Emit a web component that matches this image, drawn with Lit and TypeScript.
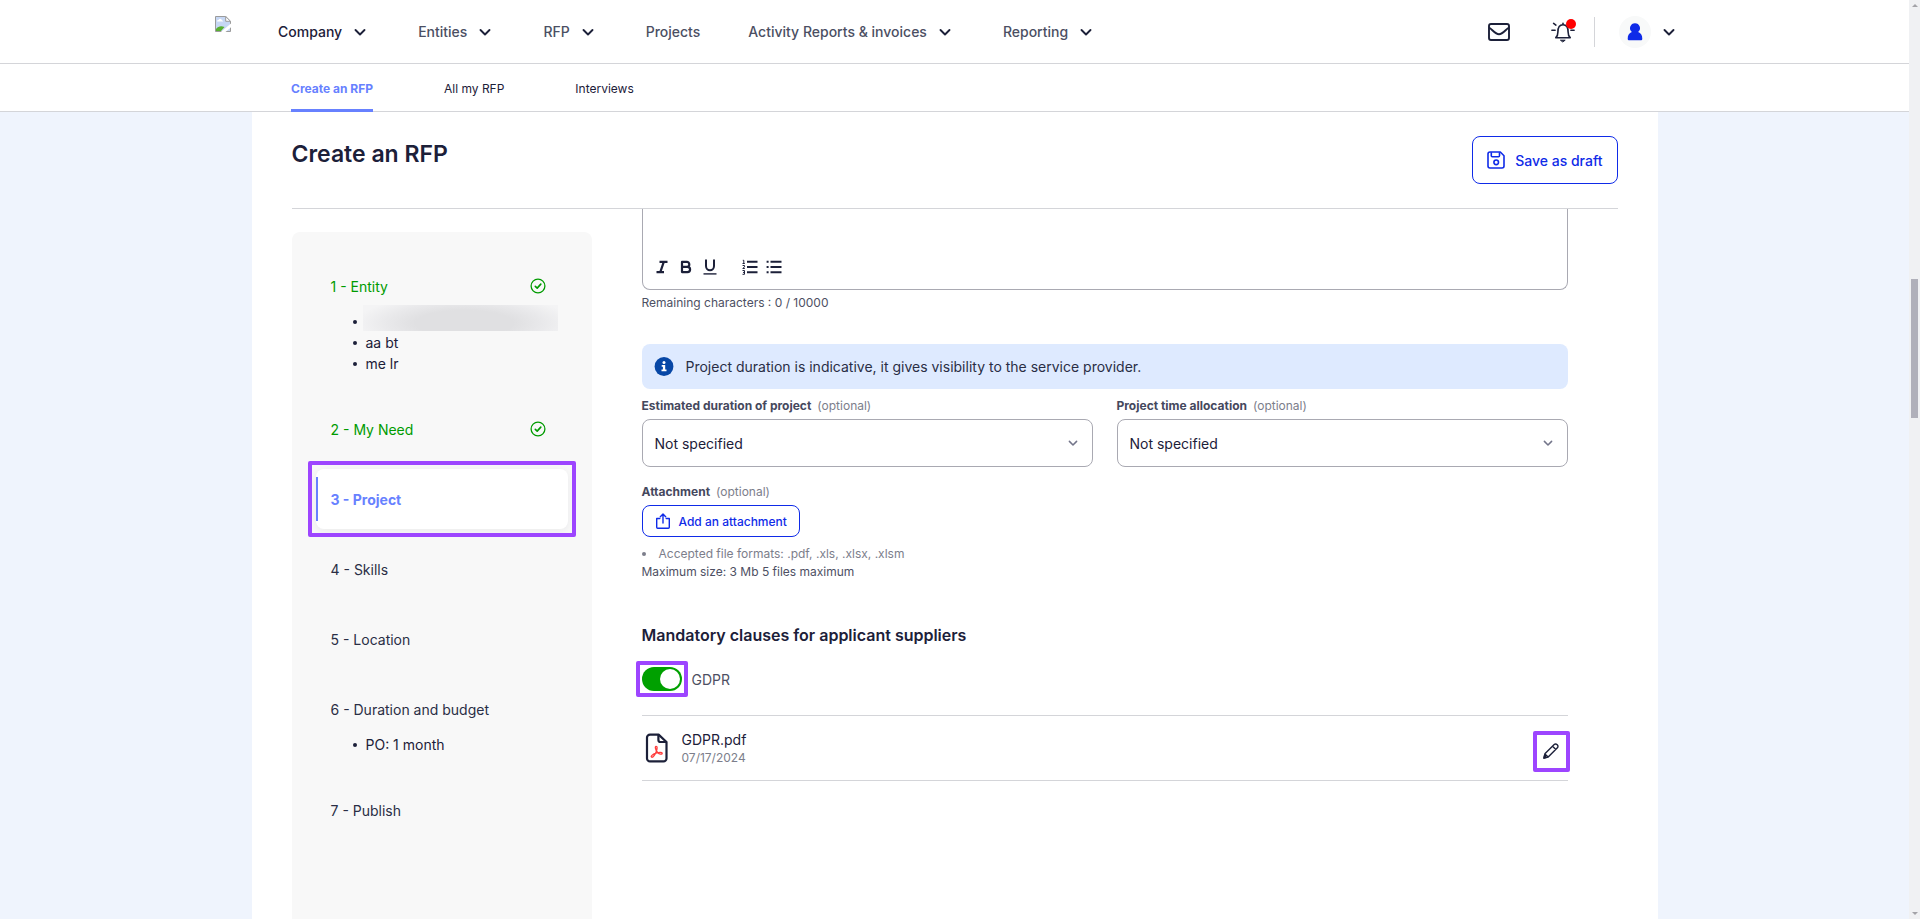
import { LitElement, html, svg, css, nothing } from "lit";
import { customElement, state } from "lit/decorators.js";
import { classMap } from "lit/directives/class-map.js";

interface Step {
  id: number;
  label: string;
  done?: boolean;
  details?: (string | null)[];
}

const MENU = [
  { label: "Company", more: true },
  { label: "Entities", more: true },
  { label: "RFP", more: true },
  { label: "Projects", more: false },
  { label: "Activity Reports & invoices", more: true },
  { label: "Reporting", more: true },
];

const TABS = ["Create an RFP", "All my RFP", "Interviews"];

// A null detail is a name that has been masked.
const STEPS: Step[] = [
  { id: 1, label: "Entity", done: true, details: [null, "aa bt", "me lr"] },
  { id: 2, label: "My Need", done: true },
  { id: 3, label: "Project" },
  { id: 4, label: "Skills" },
  { id: 5, label: "Location" },
  { id: 6, label: "Duration and budget", details: ["PO: 1 month"] },
  { id: 7, label: "Publish" },
];

const chevron = (size: number) => html`<svg width=${size} height=${size} viewBox="0 0 20 20" fill="none" stroke="currentColor" stroke-width="1.9" stroke-linecap="round" stroke-linejoin="round" aria-hidden="true">${svg`<path d="M5.5 8l4.5 4.5L14.500 8"/>`}</svg>`;

const checkIcon = html`<svg class="check" width="16" height="16" viewBox="0 0 16 16" fill="none" stroke="currentColor" stroke-width="1.3" stroke-linecap="round" stroke-linejoin="round" aria-hidden="true"><circle cx="8" cy="8" r="6.900"/><path stroke-width="1.600" d="M5.300 8.300l1.900 1.800 3.600-4"/></svg>`;

@customElement("app-header")
export class AppHeader extends LitElement {
  static styles = css`
    :host { display: block; background: #fff; color: #1c2039; }
    a, button { font: inherit; color: inherit; text-decoration: none; background: none; border: 0; padding: 0; cursor: pointer; }
    .bar { border-bottom: 1px solid #d4d5d9; }
    .inner { max-width: 1479px; margin: 0 auto; display: flex; box-sizing: border-box; }
    .top { height: 63px; align-items: center; padding-right: 15px; }
    .logo { width: 16px; height: 16px; flex: none; align-self: flex-start; margin: 16px 47px 0 0; }
    .menu { display: flex; gap: 48px; font-size: 14px; line-height: 20px; font-weight: 500; color: #4b4f63; }
    .menu button { display: flex; align-items: center; gap: 8px; white-space: nowrap; }
    .menu > :first-child { color: #1c2039; }
    svg { display: block; color: #1c2039; }
    .tools { display: flex; align-items: center; margin-left: auto; }
    .alert { position: relative; margin: 0 19px 0 40px; }
    .dot { position: absolute; top: -1px; right: -1px; width: 10px; height: 10px; border-radius: 50%; background: #f00; }
    .rule { width: 1px; height: 30px; background: #d4d5d9; }
    .account { display: flex; align-items: center; gap: 8px; margin-left: 24px; }
    .avatar { width: 32px; height: 32px; border-radius: 50%; background: #f8f9f9; display: grid; place-items: center; }
    .tabs { height: 48px; gap: 71px; padding-left: 76px; font-size: 12px; }
    .sub { box-shadow: inset 0 -1px #d4d5d9; }
    .tab { display: flex; align-items: center; box-sizing: border-box; padding-top: 4px; border-bottom: 3px solid transparent; }
    .current { color: #6781ff; font-weight: 700; border-color: #6781ff; }
  `;

  render() {
    return html`
      <header class="bar">
        <div class="inner top">
          <svg class="logo" viewBox="0 0 16 16" role="img" aria-label="Logo">
            <path d="M.5.5h10.200l4.800 4.800v10.200H.5z" fill="#c6d7f4" stroke="#9b9b9b"/>
            <path d="M2 5.500c0-1 .8-1.700 1.700-1.700C4.200 2.800 5 2.500 5.700 2.900c.8.200 1.200.9 1.300 1.500.8 0 1.200.6 1.200 1.100z" fill="#fff"/>
            <path d="M1 15v-2c2-2.700 5-3.500 8.500-2L6 15z" fill="#58b030"/>
            <path d="M10.700.5v4.800h4.800z" fill="#fff" stroke="#9b9b9b"/>
            <path d="M5.800 16L16 7.600v3.600L10.500 16z" fill="#fff"/>
          </svg>
          <nav class="menu" aria-label="Main">
            ${MENU.map((m) => m.more
              ? html`<button type="button" aria-haspopup="true">${m.label}${chevron(20)}</button>`
              : html`<a href="#">${m.label}</a>`)}
          </nav>
          <div class="tools">
            <button type="button" aria-label="Messages">
              <svg width="24" height="24" viewBox="0 0 24 24" fill="none" stroke="currentColor" stroke-width="1.900" stroke-linejoin="round" aria-hidden="true"><rect x="2" y="4" width="20" height="16" rx="2"/><path d="M2 7.500c3.500 2 6 6.700 10 6.700S18.500 9.500 22 7.500"/></svg>
            </button>
            <button type="button" class="alert" aria-label="Notifications">
              <svg width="24" height="24" viewBox="0 0 24 24" fill="none" stroke="currentColor" stroke-width="1.600" stroke-linecap="round" stroke-linejoin="round" aria-hidden="true"><path d="M4.800 17.700h14.400c-1.600-1.400-2.100-3-2.100-5.700 0-4.700-1.500-7.200-5.100-7.200S6.900 7.300 6.900 12c0 2.700-.5 4.300-2.100 5.700zM12 4.700V3.200M.9 10.200h3.200M19.900 10.200h3.200M2.600 3.400l2.300 1.700M21.400 3.400l-2.300 1.700"/><path d="M9.800 20.200h4.400L12 21.700z" fill="currentColor" stroke-width="1"/></svg>
              <span class="dot"></span>
            </button>
            <span class="rule"></span>
            <button type="button" class="account" aria-label="My account">
              <span class="avatar"><svg width="16" height="18" viewBox="0 0 16 18" fill="#0f2be8" aria-hidden="true"><path d="M8 .2a5 5 0 0 1 3.100 8.900c2.900 1 4.200 3.300 4.200 6.600 0 1-.6 1.600-1.600 1.600H2.300c-1 0-1.600-.6-1.600-1.600 0-3.300 1.300-5.600 4.200-6.600A5 5 0 0 1 8 .2z"/></svg></span>
              ${chevron(20)}
            </button>
          </div>
        </div>
      </header>
      <nav class="sub" aria-label="RFP">
        <div class="inner tabs">
          ${TABS.map((t, i) => html`<a href="#" class=${classMap({ tab: true, current: i === 0 })}>${t}</a>`)}
        </div>
      </nav>`;
  }
}

@customElement("step-list")
export class StepList extends LitElement {
  static styles = css`
    :host { display: block; box-sizing: border-box; padding: 24px; background: #f8f8f8; border-radius: 8px 8px 0 0; font-size: 14px; }
    ol, ul { list-style: none; margin: 0; padding: 0; }
    .steps { display: flex; flex-direction: column; gap: 10px; }
    .step { position: relative; border-radius: 8px; }
    .head { display: flex; align-items: center; justify-content: space-between; height: 60px; padding: 0 22px 0 15px; color: #2a2e45; text-decoration: none; }
    .done .head { color: #009b00; }
    .active { background: #fff; box-shadow: 0 2px 8px rgba(28, 32, 57, .06); }
    .active .head { color: #6781ff; font-weight: 700; }
    .active::before { content: ""; position: absolute; left: 0; top: 8px; bottom: 8px; width: 2px; background: #6781ff; }
    .active::after { content: ""; position: absolute; inset: -8px; border: 4px solid #9d45ff; border-radius: 2px; pointer-events: none; }
    .details { margin-top: -5px; padding: 0 15px 15px 37px; line-height: 21px; color: #1c2039; }
    .details li { position: relative; display: flex; align-items: center; gap: 9px; height: 21px; }
    .details li::before { content: ""; width: 4px; height: 4px; border-radius: 50%; background: #1c2039; }
    .masked { position: absolute; left: 10px; top: -6px; width: 195px; height: 26px; background: radial-gradient(ellipse 56% 110% at 52% 70%, #e0e0e2 45%, #e9e9eb 72%, #f4f4f5 100%); }
    .check { display: block; }
  `;

  render() {
    return html`<ol class="steps">
      ${STEPS.map((s) => html`
        <li class=${classMap({ step: true, done: !!s.done, active: s.id === 3 })}>
          <a class="head" href="#">${s.id} - ${s.label}${s.done ? checkIcon : nothing}</a>
          ${s.details ? html`<ul class="details">
            ${s.details.map((d) => html`<li>${d ?? html`<span class="masked"></span>`}</li>`)}
          </ul>` : nothing}
        </li>`)}
    </ol>`;
  }
}

@customElement("project-form")
export class ProjectForm extends LitElement {
  @state() private gdpr = true;

  static styles = css`
    :host { display: block; color: #1c2039; font-size: 14px; }
    * { box-sizing: border-box; }
    p, h2, ul { margin: 0; padding: 0; }
    button { font: inherit; color: inherit; background: none; border: 0; padding: 0; cursor: pointer; }
    svg { display: block; }
    .editor { border: 1px solid #a9a9b2; border-top: 0; border-radius: 0 0 8px 8px; }
    textarea { display: block; width: 100%; height: 46px; border: 0; outline: 0; resize: none; background: none; font: inherit; padding: 8px 12px; }
    .toolbar { display: flex; padding: 0 7px 10px; }
    .toolbar button { width: 24px; height: 24px; display: grid; place-items: center; }
    .lists { display: flex; margin-left: 16px; }
    .small { font-size: 12px; line-height: 18px; color: #4d5063; }
    .remaining { margin-top: 4px; }
    .info { display: flex; align-items: center; gap: 12px; margin-top: 32px; padding: 12px; line-height: 21px; border-radius: 8px; background: #deeaff; color: #2a2e45; }
    .fields { display: grid; grid-template-columns: 1fr 1fr; gap: 24px; margin-top: 8px; }
    .label { display: flex; gap: 6px; margin-bottom: 4px; font-size: 12px; line-height: 18px; font-weight: 700; color: #45485d; }
    .opt { font-weight: 400; color: #7c7e8b; }
    .picker { position: relative; display: block; }
    select { appearance: none; display: block; width: 100%; height: 48px; padding: 0 12px; border: 1px solid #a9a9b2; border-radius: 8px; background: #fff; font: inherit; color: #1c2039; }
    .picker svg { position: absolute; right: 12px; top: 16px; color: #73758a; pointer-events: none; }
    .attachment { margin-top: 16px; }
    .add { display: flex; align-items: center; gap: 8px; height: 32px; padding: 0 12px; border: 1px solid #0f2be8; border-radius: 8px; color: #0f2be8; font-size: 12px; font-weight: 500; }
    .formats { display: flex; align-items: center; gap: 13px; margin-top: 8px; color: #7c7e8b; list-style: none; }
    .formats::before { content: ""; width: 4px; height: 4px; border-radius: 50%; background: #7c7e8b; }
    h2 { margin-top: 44px; font-size: 16px; line-height: 20px; font-weight: 600; }
    .switch { display: flex; align-items: center; gap: 10px; margin-top: 22px; color: #4d5063; width: max-content; }
    .marked { position: relative; display: block; }
    .marked::after { content: ""; position: absolute; inset: -6px; border: 4px solid #9d45ff; border-radius: 2px; pointer-events: none; }
    .toggle { appearance: none; display: block; margin: 0; width: 40px; height: 24px; border-radius: 12px; background: #b4b5be; cursor: pointer; }
    .toggle::before { content: ""; display: block; width: 20px; height: 20px; margin: 2px; border-radius: 50%; background: #fff; }
    .toggle:checked { background: #00a000; }
    .toggle:checked::before { margin-left: 18px; }
    .file { display: flex; align-items: center; gap: 10px; height: 66px; margin-top: 24px; border: solid #d4d5d9; border-width: 1px 0; }
    .file > svg { width: 30px; height: 30px; flex: none; }
    .name { line-height: 19px; }
    .date { line-height: 17px; color: #7c7e8b; }
    .edit { width: 33px; height: 37px; display: grid; place-items: center; margin: 6px 0 0 auto; }
    .edit::after { inset: -2px; }
  `;

  private picker(id: string, label: string) {
    return html`<div>
      <label class="label" for=${id}>${label}<span class="opt">(optional)</span></label>
      <span class="picker">
        <select id=${id}><option>Not specified</option></select>
        ${chevron(16)}
      </span>
    </div>`;
  }

  render() {
    return html`
      <div class="editor">
        <textarea aria-label="Project description"></textarea>
        <div class="toolbar">
          <button type="button" aria-label="Italic"><svg width="12" height="14" viewBox="0 0 12 14" fill="none" stroke="currentColor" stroke-width="2.200"><path d="M3.500 1.800h8M.5 12.200h7.500M7.800 1.800L4.300 12.200"/></svg></button>
          <button type="button" aria-label="Bold"><svg width="12" height="14" viewBox="0 0 12 14" fill="none" stroke="currentColor" stroke-width="2.200" stroke-linejoin="round"><path d="M2 1.900h4.800a2.500 2.500 0 0 1 0 5H2zM2 6.900h5.500a2.600 2.600 0 0 1 0 5.200H2z"/></svg></button>
          <button type="button" aria-label="Underline"><svg width="14" height="16" viewBox="0 0 14 16" fill="none" stroke="currentColor"><path stroke-width="2" d="M3 .6v6.400a4 4.200 0 0 0 8 0V.6"/><path stroke-width="1.400" d="M.5 14.900h13"/></svg></button>
          <span class="lists">
            <button type="button" aria-label="Numbered list"><svg width="16" height="16" viewBox="0 0 16 16" fill="none" stroke="currentColor"><path stroke-width="2" d="M5 2.700h10.500M5 8h10.500M5 13.300h10.500"/><path stroke-width="1" d="M.8 1.300h1v3.200M.5 4.500h2.300M.6 6.500h1.900v1.300L.8 9.500h2M.5 11.500h2v3.800H.5M1 13.400h1.500"/></svg></button>
            <button type="button" aria-label="Bulleted list"><svg width="16" height="16" viewBox="0 0 16 16" fill="none" stroke="currentColor" stroke-width="2"><path d="M4.500 2.700h11M4.500 8h11M4.500 13.300h11M.6 2.700h2M.6 8h2M.6 13.300h2"/></svg></button>
          </span>
        </div>
      </div>
      <p class="small remaining">Remaining characters : 0 / 10000</p>

      <div class="info" role="note">
        <svg width="20" height="20" viewBox="0 0 20 20" aria-hidden="true"><circle cx="10" cy="9.500" r="9.400" fill="#0747a6"/><g fill="#fff"><circle cx="10" cy="5.500" r="1.500"/><path d="M7.700 8h3.500v4.600h1.300v1.700H7.500v-1.700h1.400V9.700H7.700z"/></g></svg>
        <span>Project duration is indicative, it gives visibility to the service provider.</span>
      </div>

      <div class="fields">
        ${this.picker("duration", "Estimated duration of project")}
        ${this.picker("allocation", "Project time allocation")}
      </div>

      <div class="attachment">
        <label class="label" for="attach">Attachment<span class="opt">(optional)</span></label>
        <button type="button" class="add" id="attach">
          <svg width="16" height="16" viewBox="0 0 16 16" fill="none" stroke="currentColor" stroke-width="1.400" stroke-linecap="round" stroke-linejoin="round" aria-hidden="true"><path d="M4.800 5.500H1.700v8.700a1 1 0 0 0 1 1h10.600a1 1 0 0 0 1-1V5.500h-3.100M8 10V1.200M5.300 3.800L8 1.100l2.700 2.700"/></svg>
          Add an attachment
        </button>
        <ul><li class="small formats">Accepted file formats: .pdf, .xls, .xlsx, .xlsm</li></ul>
        <p class="small">Maximum size: 3 Mb 5 files maximum</p>
      </div>

      <h2>Mandatory clauses for applicant suppliers</h2>
      <label class="switch">
        <span class="marked"><input class="toggle" type="checkbox" role="switch" .checked=${this.gdpr}
          @change=${(e: Event) => (this.gdpr = (e.target as HTMLInputElement).checked)} /></span>
        GDPR
      </label>

      <div class="file">
        <svg viewBox="0 0 30 30" fill="none" stroke="#1c2039" stroke-width="2.200" stroke-linejoin="round" aria-hidden="true"><path d="M8 1.600h8.600L24.500 9v16.400a3 3 0 0 1-3 3H8a3 3 0 0 1-3-3V4.600a3 3 0 0 1 3-3z"/><path d="M16.400 1.800V7a2 2 0 0 0 2 2h6"/><path stroke="#ff3e3e" stroke-width="1.300" d="M13.900 13.300c1.700-.2 1.300 2.400.5 4.900-1.200 3.400-3.300 6.500-4.700 6-1.600-.7.800-2.900 4.200-4 3-.9 6.300-1.300 6.300.2 0 1.600-3.400.7-5-1.400-1.500-1.900-2.500-5.500-1.300-5.700z"/></svg>
        <div>
          <div class="name">GDPR.pdf</div>
          <div class="small date">07/17/2024</div>
        </div>
        <button type="button" class="edit marked" aria-label="Edit GDPR.pdf">
          <svg width="16" height="16" viewBox="0 0 16 16" fill="none" stroke="#1c2039" stroke-width="1.400" stroke-linejoin="round" aria-hidden="true"><path d="M.9 15.100l1-4.300L11.200 1.600a1.900 1.900 0 0 1 2.700 0l.5.500a1.900 1.900 0 0 1 0 2.700L5.200 14.100zM9.600 3.200l3.200 3.200M1.900 10.900l3.200 3.200"/><path d="M1 15l.6-2.500 1.900 1.900z" fill="#1c2039"/></svg>
        </button>
      </div>`;
  }
}

@customElement("app-root")
export class AppRoot extends LitElement {
  static styles = css`
    :host { display: grid; grid-template-columns: minmax(0, 1fr) 11px; min-height: 100vh; background: #eff4fd; color: #1c2039; font-family: Inter, "Noto Sans", sans-serif; font-size: 14px; }
    .page { display: flex; flex-direction: column; }
    .sheet { flex: 1; display: flex; flex-direction: column; box-sizing: border-box; width: 100%; max-width: 1406px; margin: 0 auto; padding: 0 40px; background: #fff; }
    .title { display: flex; align-items: flex-start; justify-content: space-between; padding: 24px 0; border-bottom: 1px solid #d4d5d9; }
    h1 { margin: 0; font-size: 23px; line-height: 36px; font-weight: 600; }
    .save { display: flex; align-items: center; gap: 10px; height: 48px; padding: 0 14px; border: 1px solid #0f2be8; border-radius: 8px; background: #fff; color: #0f2be8; font: inherit; font-weight: 500; cursor: pointer; }
    .save svg { display: block; }
    .body { flex: 1; display: flex; gap: 50px; padding-right: 50px; }
    step-list { flex: none; width: 300px; margin-top: 23px; }
    project-form { flex: 1; min-width: 0; }
    .scroll { display: grid; grid-template-rows: 11px 268fr 139fr 490fr 11px; justify-items: center; align-items: center; background: #f0f1f3; }
    .arrow { border: 3px solid transparent; width: 0; height: 0; }
    .up { border-top: 0; border-bottom-color: #a3a3a8; }
    .down { border-bottom: 0; border-top-color: #a3a3a8; }
    .thumb { grid-row: 3; width: 7px; height: 100%; background: #b0b0ba; }
    .down { grid-row: 5; }
  `;

  render() {
    return html`
      <div class="page">
        <app-header></app-header>
        <main class="sheet">
          <div class="title">
            <h1>Create an RFP</h1>
            <button type="button" class="save">
              <svg width="18" height="18" viewBox="0 0 18 18" fill="none" stroke="currentColor" stroke-width="1.600" stroke-linejoin="round" aria-hidden="true"><path d="M3 1h10.300L17 4.700V15a2 2 0 0 1-2 2H3a2 2 0 0 1-2-2V3a2 2 0 0 1 2-2z"/><path d="M4.300 1.200v3.500a1 1 0 0 0 1 1h6.200a1 1 0 0 0 1-1V1.200"/><circle cx="9.200" cy="11.300" r="2.300"/></svg>
              Save as draft
            </button>
          </div>
          <div class="body">
            <step-list></step-list>
            <project-form></project-form>
          </div>
        </main>
      </div>
      <div class="scroll" aria-hidden="true">
        <span class="arrow up"></span>
        <span class="thumb"></span>
        <span class="arrow down"></span>
      </div>`;
  }
}
